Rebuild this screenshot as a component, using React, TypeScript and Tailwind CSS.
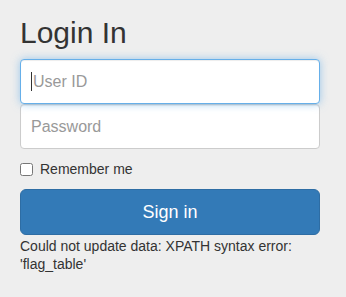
export default function App() {
  return (
    <div className="min-h-[297px] w-full bg-[#eeeeee] font-['Liberation_Sans',Arial,sans-serif] text-[#333333]">
      <div className="w-[300px] ml-[20px] pt-[16px]">
        <h2 className="text-[30px] leading-[33px] font-normal mb-[10px]">Login In</h2>

        <div className="relative">
          <input
            type="text"
            placeholder="User ID"
            className="block w-full h-[45px] pl-[12px] pr-[10px] text-[16px] bg-white border border-[#66afe9] rounded-[4px] outline-none placeholder:text-[#999999] shadow-[inset_0_1px_1px_rgba(0,0,0,0.075),0_0_8px_rgba(102,175,233,0.6)]"
          />
          <span className="absolute left-[11px] top-[13px] w-px h-[19px] bg-[#333333]" />
        </div>
        <input
          type="password"
          placeholder="Password"
          className="block w-full h-[45px] px-[10px] text-[16px] bg-white border border-[#cccccc] rounded-[4px] outline-none placeholder:text-[#999999] shadow-[inset_0_1px_1px_rgba(0,0,0,0.075)]"
        />

        <label className="flex items-center h-[20px] mt-[10px] mb-[10px] text-[14px] leading-[20px]">
          <input type="checkbox" className="w-[13px] h-[13px] m-0 mr-[7px] mt-[1px]" />
          Remember me
        </label>

        <button
          type="button"
          className="w-full h-[46px] rounded-[6px] bg-[#337ab7] border border-[#2e6da4] text-white text-[18px] leading-[24px]"
        >
          Sign in
        </button>

        <p className="mt-[2px] text-[14px] leading-[18px]">
          Could not update data: XPATH syntax error: 'flag_table'
        </p>
      </div>
    </div>
  );
}
